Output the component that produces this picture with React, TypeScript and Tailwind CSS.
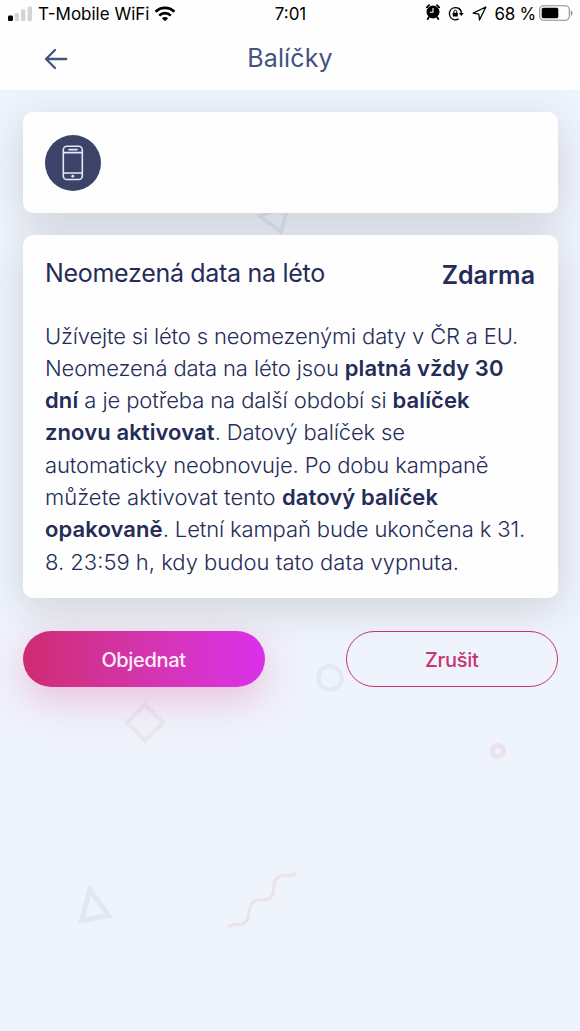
import type { ReactNode } from "react";

function StatusBar() {
  return (
    <div className="flex h-7 items-center text-[17px] text-black">
      <div className="flex flex-1 items-center pl-2">
        <svg width="24" height="16" viewBox="0 0 24 16">
          <rect x="0" y="9.5" width="5" height="5.5" rx="1.2" fill="#000" />
          <rect x="6.6" y="7" width="4.4" height="8" rx="1.2" fill="#d4d4d4" />
          <rect x="13" y="3.5" width="4.4" height="11.5" rx="1.2" fill="#d4d4d4" />
          <rect x="19.6" y="0.5" width="4.4" height="14.500" rx="1.2" fill="#d4d4d4" />
        </svg>
        <span className="ml-1.5 pt-0.5 whitespace-nowrap">T-Mobile WiFi</span>
        <svg className="ml-[5px]" width="22" height="16" viewBox="0 0 22 16" fill="none" stroke="#000" strokeWidth="2.7">
          <path d="M1.6 5.7a13.3 13.3 0 0 1 18.8 0" />
          <path d="M5.2 9.6a8.2 8.2 0 0 1 11.6 0" />
          <path d="M11 15.3 7.9 12.2a4.4 4.4 0 0 1 6.2 0Z" fill="#000" stroke="none" />
        </svg>
      </div>
      <span className="pt-0.5">7:01</span>
      <div className="flex flex-1 items-center justify-end pr-[7px]">
        <svg className="-mt-1" width="14" height="16" viewBox="0 0 14 16">
          <circle cx="7" cy="8" r="6.5" />
          <path d="M.9 3.4 3 1.2M13.1 3.4 11 1.2M2.7 13.400 1.7 15M11.300 13.400l1 1.600" stroke="#000" strokeWidth="1.8" strokeLinecap="round" />
          <path d="M7 4v4.300H3.800" fill="none" stroke="#fff" strokeWidth="1.1" />
        </svg>
        <svg className="-mt-0.5 ml-[8px]" width="16" height="15" viewBox="0 0 16 15" fill="none" stroke="#000" strokeWidth="1.3">
          <path d="M12.9 5A6.1 6.1 0 1 0 10.600 12.900" />
          <path d="M10.300 1.900A6.100 6.100 0 0 1 13.300 7.600" />
          <path d="m10.900 7 2.400 2.900 2.400-2.900Z" fill="#000" stroke="none" />
          <rect x="4.800" y="6.700" width="5" height="3.900" rx=".5" fill="#000" stroke="none" />
          <path d="M5.900 7V5.600a1.400 1.400 0 0 1 2.800 0V7" strokeWidth="1" />
        </svg>
        <svg className="-mt-0.5 ml-[8px]" width="15" height="15" viewBox="0 0 15 15" fill="none" stroke="#000" strokeWidth="1.3" strokeLinejoin="round">
          <path d="M13.800 1 1.200 7.200l5.600.9.700 5.900Z" />
        </svg>
        <span className="ml-[7px] pt-0.5 tracking-[-0.25px] whitespace-nowrap">68 %</span>
        <svg className="-mt-0.5 ml-[3px]" width="34" height="16" viewBox="0 0 34 16">
          <rect x=".7" y=".7" width="29.6" height="14.6" rx="4" fill="none" stroke="#8d8d8d" strokeWidth="1.1" />
          <rect x="2.7" y="2.8" width="16.6" height="10.4" rx="1.6" fill="#000" />
          <path d="M31.8 5.2c2.2.9 2.2 4.7 0 5.6Z" fill="#8d8d8d" />
        </svg>
      </div>
    </div>
  );
}

function Card({ className, children }: { className: string; children: ReactNode }) {
  return (
    <section className={`relative rounded-[10px] bg-[#fefefe] shadow-[0_10px_40px_rgba(40,40,40,0.16)] ${className}`}>
      {children}
    </section>
  );
}

function Backdrop() {
  return (
    <svg className="absolute inset-0" width="580" height="1031" viewBox="0 0 580 1031" fill="none">
      <path d="M260 216 281 232 288 206Z" stroke="#dde6ef" strokeWidth="4" />
      <path d="M145 704.5 163 722.5 145 740.5 127 722.5Z" stroke="#e7e9f1" strokeWidth="4.2" />
      <circle cx="330" cy="678" r="11.7" stroke="#e3e8f1" strokeWidth="4.4" />
      <circle cx="498" cy="751" r="5.7" stroke="#ece1ee" strokeWidth="5.2" />
      <path d="M90 889.5 81.5 920.5 108.5 915.5Z" stroke="#e3e7f0" strokeWidth="5" />
      <path
        d="M229.5 926.5C234 923 237 925 241 924.5C249 922 249 916 249 911C250 904 254 900 261 900C266 900 271 900 273.5 892C274.5 886 272 881 279 876.5C284 873 290 878 295 873.5"
        stroke="#ece2ee"
        strokeWidth="3.2"
        strokeLinecap="round"
      />
    </svg>
  );
}

export default function App() {
  return (
    <main className="relative flex h-[1031px] w-[580px] flex-col overflow-hidden bg-[#eff3fb] font-['Inter',sans-serif] text-[#252c58]">
      <header className="relative z-10 h-[90px] bg-[#fefefe]">
        <StatusBar />
        <div className="flex h-[62px] items-center px-11">
          <button className="w-12" aria-label="Zpět">
            <svg width="24" height="22" viewBox="0 0 24 22" fill="none" stroke="#455580" strokeWidth="2.3" strokeLinecap="round" strokeLinejoin="round">
              <path d="M22.300 11H2M11 2 2 11l9 9" />
            </svg>
          </button>
          <h1 className="flex-1 text-center text-[25px] tracking-[0.1px] text-[#435380]">Balíčky</h1>
          <div className="w-12" />
        </div>
      </header>

      <Backdrop />

      <div className="flex flex-col gap-[22px] px-[22.5px] pt-[22px]">
        <Card className="flex h-[101px] items-center px-[22px]">
          <div className="flex size-14 items-center justify-center rounded-full bg-[#3b4468]">
            <svg width="22" height="36" viewBox="0 0 22 36" fill="none" stroke="#e4e8fb" strokeWidth="1.6">
              <rect x="1.3" y="1.3" width="19" height="33.2" rx="3.6" />
              <path d="M1.3 7.6h19M1.3 28h19" />
              <path d="M7 4.6h8" strokeLinecap="round" />
              <circle cx="10.8" cy="31.2" r="1.4" fill="#e4e8fb" stroke="none" />
            </svg>
          </div>
        </Card>

        <Card className="h-[363px] px-[22.5px] pt-[20px]">
          <div className="flex items-center justify-between leading-8">
            <h2 className="text-[25px] tracking-[-0.3px]">Neomezená data na léto</h2>
            <span className="pt-1 text-[25px] font-semibold">Zdarma</span>
          </div>
          <p className="mt-[28.5px] whitespace-nowrap text-[22px] leading-[32.3px] font-light tracking-[-0.13px] [&_b]:font-semibold [&_b]:tracking-[0.1px]">
            <span className="tracking-[-0.16px]">Užívejte si léto s neomezenými daty v ČR a EU.</span>
            <br />
            <span>Neomezená data na léto jsou <b>platná vždy 30</b></span>
            <br />
            <span className="tracking-[-0.1px]"><b>dní</b> a je potřeba na další období si <b>balíček</b></span>
            <br />
            <span><b>znovu aktivovat</b>. Datový balíček se</span>
            <br />
            <span>automaticky neobnovuje. Po dobu kampaně</span>
            <br />
            <span className="tracking-[0.03px]">můžete aktivovat tento <b>datový balíček</b></span>
            <br />
            <span><b>opakovaně</b>. Letní kampaň bude ukončena k 31.</span>
            <br />
            <span className="tracking-normal">8. 23:59 h, kdy budou tato data vypnuta.</span>
          </p>
        </Card>
      </div>

      <div className="relative mt-[33px] flex justify-between px-[22.5px]">
        <button className="h-14 w-[242px] rounded-full bg-linear-to-r from-[#cf2b70] to-[#da2fea] pt-0.5 text-[20px] font-medium tracking-[-0.35px] text-[#ffeefa] shadow-[0_12px_38px_rgba(225,40,130,0.26)]">
          Objednat
        </button>
        <button className="h-14 w-[211.5px] rounded-full border-[1.5px] border-[#c83370] pt-0.5 text-[20px] font-medium tracking-[-0.25px] text-[#c83370]">
          Zrušit
        </button>
      </div>
    </main>
  );
}
